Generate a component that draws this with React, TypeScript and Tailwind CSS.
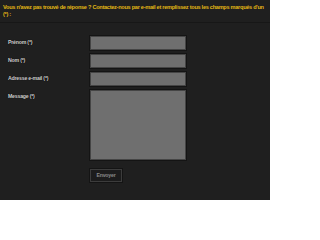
const fields = [
  { label: "Prénom (*)", type: "text" },
  { label: "Nom (*)", type: "text" },
  { label: "Adresse e-mail (*)", type: "email" },
];

export default function App() {
  return (
    <div className="w-[270px] h-[200px] bg-[#1f1f1f] font-['Liberation_Sans',Arial,sans-serif] antialiased overflow-hidden">
      <div className="h-[23px] pl-[3px] pr-[6px] pt-[4px] border-b border-[#171717]">
        <p className="text-[5.6px] leading-[7px] font-bold tracking-[-0.28px] text-[#e2b714]">
          Vous n'avez pas trouvé de réponse ? Contactez-nous par e-mail et remplissez tous les champs marqués d'un (*) :
        </p>
      </div>

      <form className="grid grid-cols-[82px_96px] gap-y-[4px] pl-[8px] pt-[13px]">
        {fields.map((f) => (
          <div key={f.label} className="contents">
            <label className="h-[14px] flex items-center text-[5.2px] font-bold tracking-[-0.2px] text-[#d0d0d0] [text-shadow:0_0_1px_#000]">
              {f.label}
            </label>
            <input
              type={f.type}
              className="h-[14px] bg-[#6f6f6f] border border-[#454545] shadow-[0_0_0_1px_#141414] outline-none"
            />
          </div>
        ))}
        <label className="h-[14px] flex items-center text-[5.2px] font-bold tracking-[-0.2px] text-[#d0d0d0] [text-shadow:0_0_1px_#000]">
          Message (*)
        </label>
        <textarea className="h-[70px] bg-[#6f6f6f] border border-[#454545] shadow-[0_0_0_1px_#141414] outline-none resize-none" />
        <div />
        <div className="pt-[5px]">
          <button
            type="button"
            className="w-[32px] h-[13px] bg-[#1c1c1c] border border-[#3c3c3c] shadow-[0_0_0_1px_#141414] text-[5.2px] font-bold tracking-[-0.2px] text-[#8a8a8a] flex items-center justify-center"
          >
            Envoyer
          </button>
        </div>
      </form>
    </div>
  );
}
